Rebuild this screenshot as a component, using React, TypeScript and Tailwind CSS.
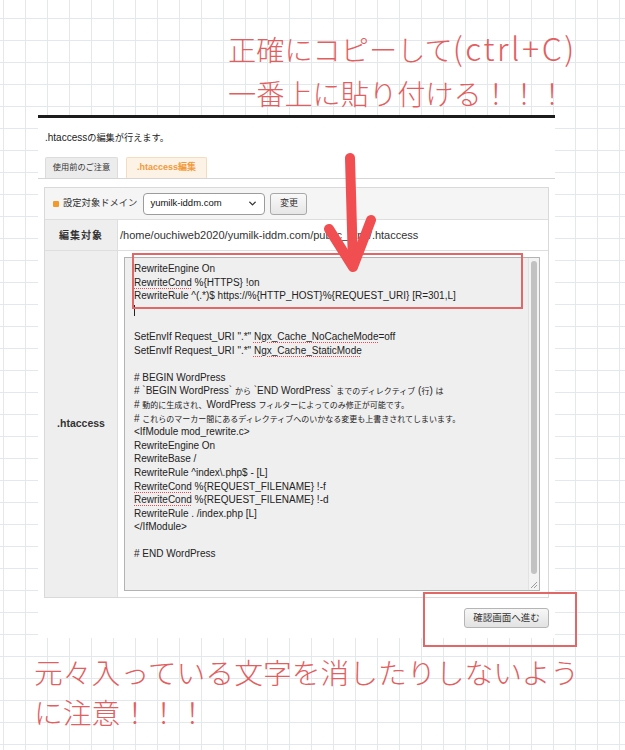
import React from "react";
import { ChevronDown } from "lucide-react";

function Sp({ children }: { children: React.ReactNode }) {
  return (
    <span className="underline decoration-dotted decoration-[#e05050] underline-offset-2">
      {children}
    </span>
  );
}

function J({ children }: { children: React.ReactNode }) {
  return <span className="text-[8px]">{children}</span>;
}

const codeLines: React.ReactNode[] = [
  <>RewriteEngine On</>,
  <>
    <Sp>RewriteCond</Sp> %{"{"}HTTPS{"}"} !on
  </>,
  <>RewriteRule ^(.*)$ https://%{"{"}HTTP_HOST{"}"}%{"{"}REQUEST_URI{"}"} [R=301,L]</>,
  <>
    <span className="inline-block w-px h-[11px] bg-[#222] align-middle" />
  </>,
  <>&nbsp;</>,
  <>
    SetEnvIf Request_URI ".*" <Sp>Ngx_Cache_NoCacheMode</Sp>=off
  </>,
  <>
    SetEnvIf Request_URI ".*" <Sp>Ngx_Cache_StaticMode</Sp>
  </>,
  <>&nbsp;</>,
  <># BEGIN WordPress</>,
  <>
    # `BEGIN WordPress` <J>から</J> `END WordPress` <J>までのディレクティブ</J> (<J>行</J>) <J>は</J>
  </>,
  <>
    # <J>動的に生成され、</J>WordPress <J>フィルターによってのみ修正が可能です。</J>
  </>,
  <>
    # <J>これらのマーカー間にあるディレクティブへのいかなる変更も上書きされてしまいます。</J>
  </>,
  <>&lt;IfModule mod_rewrite.c&gt;</>,
  <>RewriteEngine On</>,
  <>RewriteBase /</>,
  <>RewriteRule ^index\.php$ - [L]</>,
  <>
    <Sp>RewriteCond</Sp> %{"{"}REQUEST_FILENAME{"}"} !-f
  </>,
  <>
    <Sp>RewriteCond</Sp> %{"{"}REQUEST_FILENAME{"}"} !-d
  </>,
  <>RewriteRule . /index.php [L]</>,
  <>&lt;/IfModule&gt;</>,
  <>&nbsp;</>,
  <># END WordPress</>,
];

export default function App() {
  return (
    <div className="relative w-[625px] h-[750px] overflow-hidden bg-white bg-[linear-gradient(to_right,#e3e8ee_1px,transparent_1px),linear-gradient(to_bottom,#e3e8ee_1px,transparent_1px)] bg-[size:22px_22px] bg-[position:3px_18px] font-['Liberation_Sans','Noto_Sans_CJK_JP',sans-serif] text-[#333]">
      {/* top annotation */}
      <div className="pl-[228px] pt-[27px] text-[28.2px] leading-[44px] font-light text-[#e35f5f] font-['Noto_Sans_CJK_JP',sans-serif] whitespace-nowrap">
        <div className="h-[44px]">
          正確にコピーして<span className="text-[32px] leading-[30px] tracking-[2.5px]">(ctrl+C)</span>
        </div>
        <div className="h-[44px]">一番上に貼り付ける！！！</div>
      </div>

      {/* black rule */}
      <div className="ml-[38px] w-[517px] h-[3px] bg-[#1c1c1c]" />

      {/* screenshot panel */}
      <div className="ml-[38px] w-[517px] bg-white pb-[10px]">
        <div className="pl-[7px] pt-[13px] text-[10px] leading-[14px] text-[#222]">
          .htaccess<span className="text-[9.2px]">の編集が行えます。</span>
        </div>

        {/* tabs */}
        <div className="mt-[12px] h-[22px] flex items-end gap-[8px] pl-[7px] border-b border-[#d5d5d5]">
          <div className="w-[73px] h-[21px] flex items-center justify-center bg-[#ececec] border border-b-0 border-[#dcdcdc] rounded-t-[2px] text-[8.2px] text-[#333]">
            使用前のご注意
          </div>
          <div className="w-[81px] h-[21px] flex items-center justify-center bg-[#fdf2e6] border border-b-0 border-[#f3dcc0] rounded-t-[2px] text-[9px] font-bold text-[#f29a3a]">
            .htaccess編集
          </div>
        </div>

        {/* table */}
        <div className="mt-[8px] ml-[6px] w-[505px] border border-[#d9d9d9]">
          {/* domain row */}
          <div className="h-[32px] flex items-center pl-[8px] bg-[#f5f5f5] border-b border-[#dedede]">
            <span className="w-[6px] h-[6px] rounded-[1px] bg-[#f39a2b]" />
            <span className="ml-[4px] text-[9.3px] text-[#333]">設定対象ドメイン</span>
            <div className="ml-[6px] w-[122px] h-[22px] flex items-center justify-between pl-[6px] pr-[6px] bg-white border border-[#9c9c9c] rounded-[4px] text-[9.5px] text-[#111]">
              <span>yumilk-iddm.com</span>
              <ChevronDown size={11} strokeWidth={3} className="text-[#333]" />
            </div>
            <div className="ml-[5px] w-[37px] h-[22px] flex items-center justify-center bg-[linear-gradient(#f9f9f9,#e6e6e6)] border border-[#a8a8a8] rounded-[3px] text-[9px] text-[#333]">
              変更
            </div>
          </div>

          {/* target row */}
          <div className="h-[31px] flex border-b border-[#dedede]">
            <div className="w-[73px] flex items-center justify-center bg-[#eeeeee] border-r border-[#dedede] text-[10px] font-bold tracking-[1px] text-[#333]">
              編集対象
            </div>
            <div className="flex items-center pl-[2px] text-[11px] text-[#333]">
              /home/ouchiweb2020/yumilk-iddm.com/public_html/.htaccess
            </div>
          </div>

          {/* htaccess row */}
          <div className="h-[346px] flex">
            <div className="w-[73px] flex items-center justify-center bg-[#eeeeee] border-r border-[#dedede] text-[10.5px] font-bold text-[#333]">
              .htaccess
            </div>
            <div className="flex-1 pl-[6px] pr-[8px] pt-[6px] pb-[6px]">
              <div className="relative h-[334px] bg-[#efefef] border border-[#b3b3b3] pl-[9px] pt-[4px] text-[10px] leading-[13.6px] text-[#222] whitespace-nowrap overflow-hidden">
                {codeLines.map((l, i) => (
                  <div key={i} className="h-[13.6px]">
                    {l}
                  </div>
                ))}
                {/* scrollbar */}
                <div className="absolute right-0 top-0 bottom-0 w-[11px] bg-[#f3f3f3] border-l border-[#e2e2e2]">
                  <div className="mx-auto mt-[3px] w-[6px] h-[313px] rounded-full bg-[#c2c2c2]" />
                </div>
                <svg className="absolute right-[1px] bottom-[1px]" width="9" height="9" viewBox="0 0 9 9">
                  <path d="M8 2 L2 8 M8 5 L5 8" stroke="#9a9a9a" strokeWidth="1" />
                </svg>
              </div>
            </div>
          </div>
        </div>

        {/* confirm button */}
        <div className="mt-[10px] ml-[6px] w-[505px] flex justify-end">
          <div className="w-[85px] h-[20px] flex items-center justify-center bg-[linear-gradient(#f7f7f7,#e2e2e2)] border border-[#b5b5b5] rounded-[3px] text-[9.5px] text-[#333]">
            確認画面へ進む
          </div>
        </div>
      </div>

      {/* bottom annotation */}
      <div className="mt-[14px] pl-[34px] text-[28.8px] leading-[40px] font-light text-[#e35f5f] font-['Noto_Sans_CJK_JP',sans-serif] whitespace-nowrap">
        <div>元々入っている文字を消したりしないよう</div>
        <div>に注意！！！</div>
      </div>

      {/* overlays: highlight boxes and arrow */}
      <div className="absolute left-[132px] top-[253px] w-[391px] h-[56px] border-2 border-[#e26868]" />
      <div className="absolute left-[423px] top-[592px] w-[154px] h-[55px] border-2 border-[#e26868]" />
      <svg className="absolute left-0 top-0 pointer-events-none" width="625" height="750" viewBox="0 0 625 750">
        <path
          d="M350 158 C 351 190, 352 230, 353 266"
          stroke="#f04e50"
          strokeWidth="10"
          fill="none"
          strokeLinecap="round"
        />
        <path
          d="M329 229 L353 267 L371 220"
          stroke="#f04e50"
          strokeWidth="10"
          fill="none"
          strokeLinecap="round"
          strokeLinejoin="round"
        />
      </svg>
    </div>
  );
}
